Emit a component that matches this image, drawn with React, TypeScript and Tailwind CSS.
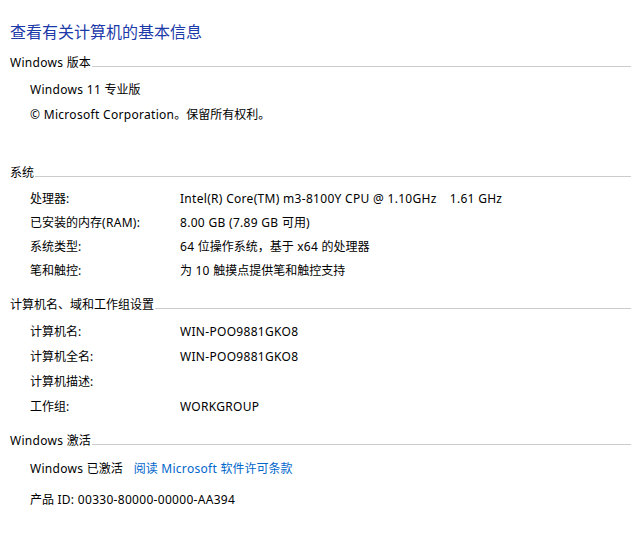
import React from "react";

const font = { fontFamily: '"Segoe UI", "Noto Sans", "Noto Sans CJK SC", sans-serif' };

function T({ children }: { children: string }) {
  const parts = children.split(/([\u3000-\u303f\u4e00-\u9fff\uff00-\uffef]+)/);
  return (
    <>
      {parts.map((p, i) =>
        p === "" ? null : /[\u3000-\u303f\u4e00-\u9fff\uff00-\uffef]/.test(p) ? (
          <span key={i}>{p}</span>
        ) : (
          <span key={i} className="tracking-[0.3px]">
            {p}
          </span>
        )
      )}
    </>
  );
}

function Heading({ text, className = "" }: { text: string; className?: string }) {
  return (
    <div className={`flex h-[16px] items-center ${className}`}>
      <span className="whitespace-pre text-[12px] text-black">
        <T>{text}</T>
      </span>
      <div className="ml-px mt-[6px] h-px flex-1 bg-[#cccccc]" />
    </div>
  );
}

function Row({ label, value, h = "h-[25px]" }: { label: string; value?: React.ReactNode; h?: string }) {
  return (
    <div className={`flex ${h} items-center pl-[20px] text-[12px] text-black`}>
      <span className="w-[150px] shrink-0 whitespace-pre">
        <T>{label}</T>
      </span>
      {value !== undefined && <span className="whitespace-pre">{value}</span>}
    </div>
  );
}

export default function App() {
  return (
    <div className="h-[538px] w-[631px] overflow-hidden bg-white pl-[10px] pt-[22px]" style={font}>
      <div className="flex h-[20px] items-center text-[16px] text-[#1c3aa9]">查看有关计算机的基本信息</div>

      <Heading text="Windows 版本" className="mt-[13px]" />
      <div className="mt-[6px] flex h-[25px] items-center whitespace-pre pl-[20px] text-[12px] text-black">
        <T>Windows 11 专业版</T>
      </div>
      <div className="flex h-[25px] items-center whitespace-pre pl-[20px] text-[12px] text-black">
        <T>© Microsoft Corporation。保留所有权利。</T>
      </div>

      <Heading text="系统" className="mt-[38px]" />
      <div className="mt-[6px]">
        <Row
          h="h-[24px]"
          label="处理器:"
          value={
            <>
              <T>Intel(R) Core(TM) m3-8100Y CPU @ 1.10GHz</T>
              <span className="ml-[13px]">
                <T>1.61 GHz</T>
              </span>
            </>
          }
        />
        <Row h="h-[24px]" label="已安装的内存(RAM):" value={<T>8.00 GB (7.89 GB 可用)</T>} />
        <Row h="h-[24px]" label="系统类型:" value={<T>64 位操作系统，基于 x64 的处理器</T>} />
        <Row h="h-[24px]" label="笔和触控:" value={<T>为 10 触摸点提供笔和触控支持</T>} />
      </div>

      <Heading text="计算机名、域和工作组设置" className="mt-[14px]" />
      <div className="mt-[6px]">
        <Row label="计算机名:" value={<T>WIN-POO9881GKO8</T>} />
        <Row label="计算机全名:" value={<T>WIN-POO9881GKO8</T>} />
        <Row label="计算机描述:" />
        <Row label="工作组:" value={<T>WORKGROUP</T>} />
      </div>

      <Heading text="Windows 激活" className="mt-[14px]" />
      <div className="mt-[7px] flex h-[25px] items-center whitespace-pre pl-[20px] text-[12px] text-black">
        <span>
          <T>Windows 已激活</T>
        </span>
        <span className="ml-[11px] text-[#0066cc]">
          <T>阅读 Microsoft 软件许可条款</T>
        </span>
      </div>
      <div className="mt-[6px] flex h-[25px] items-center whitespace-pre pl-[20px] text-[12px] text-black">
        <T>产品 ID: 00330-80000-00000-AA394</T>
      </div>
    </div>
  );
}
